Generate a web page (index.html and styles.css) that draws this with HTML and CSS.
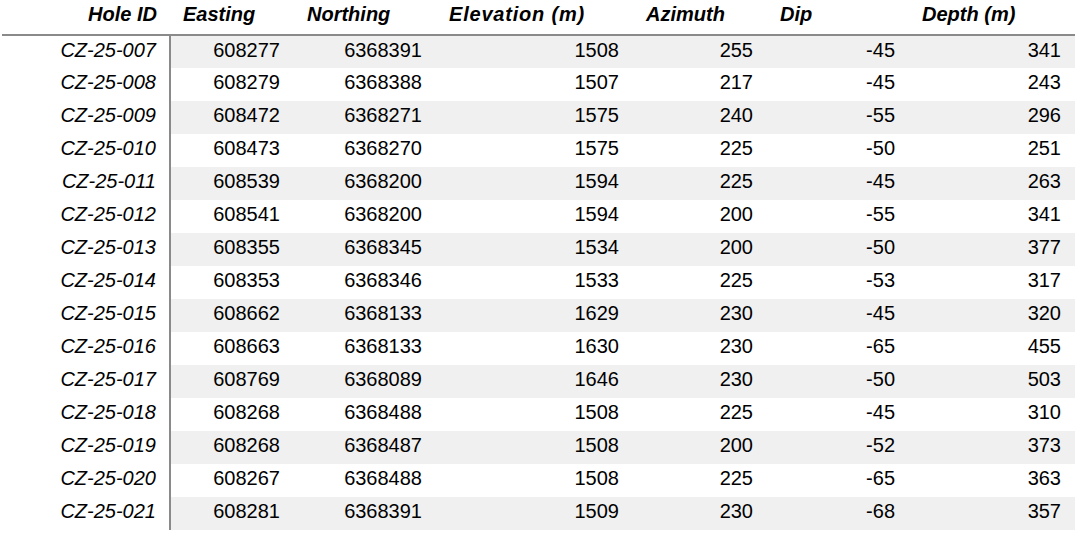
FILE: index.html
```html
<!DOCTYPE html>
<html>
<head>
<meta charset="utf-8">
<link rel="stylesheet" href="styles.css">
</head>
<body>
<table class="holes">
  <thead>
    <tr>
      <th class="c-id">Hole ID</th>
      <th class="c-e">Easting</th>
      <th class="c-n">Northing</th>
      <th class="c-el">Elevation (m)</th>
      <th class="c-az">Azimuth</th>
      <th class="c-dip">Dip</th>
      <th class="c-dp">Depth (m)</th>
    </tr>
  </thead>
  <tbody>
    <tr><td class="id">CZ-25-007</td><td class="first">608277</td><td>6368391</td><td>1508</td><td>255</td><td>-45</td><td>341</td></tr>
    <tr><td class="id">CZ-25-008</td><td class="first">608279</td><td>6368388</td><td>1507</td><td>217</td><td>-45</td><td>243</td></tr>
    <tr><td class="id">CZ-25-009</td><td class="first">608472</td><td>6368271</td><td>1575</td><td>240</td><td>-55</td><td>296</td></tr>
    <tr><td class="id">CZ-25-010</td><td class="first">608473</td><td>6368270</td><td>1575</td><td>225</td><td>-50</td><td>251</td></tr>
    <tr><td class="id">CZ-25-011</td><td class="first">608539</td><td>6368200</td><td>1594</td><td>225</td><td>-45</td><td>263</td></tr>
    <tr><td class="id">CZ-25-012</td><td class="first">608541</td><td>6368200</td><td>1594</td><td>200</td><td>-55</td><td>341</td></tr>
    <tr><td class="id">CZ-25-013</td><td class="first">608355</td><td>6368345</td><td>1534</td><td>200</td><td>-50</td><td>377</td></tr>
    <tr><td class="id">CZ-25-014</td><td class="first">608353</td><td>6368346</td><td>1533</td><td>225</td><td>-53</td><td>317</td></tr>
    <tr><td class="id">CZ-25-015</td><td class="first">608662</td><td>6368133</td><td>1629</td><td>230</td><td>-45</td><td>320</td></tr>
    <tr><td class="id">CZ-25-016</td><td class="first">608663</td><td>6368133</td><td>1630</td><td>230</td><td>-65</td><td>455</td></tr>
    <tr><td class="id">CZ-25-017</td><td class="first">608769</td><td>6368089</td><td>1646</td><td>230</td><td>-50</td><td>503</td></tr>
    <tr><td class="id">CZ-25-018</td><td class="first">608268</td><td>6368488</td><td>1508</td><td>225</td><td>-45</td><td>310</td></tr>
    <tr><td class="id">CZ-25-019</td><td class="first">608268</td><td>6368487</td><td>1508</td><td>200</td><td>-52</td><td>373</td></tr>
    <tr><td class="id">CZ-25-020</td><td class="first">608267</td><td>6368488</td><td>1508</td><td>225</td><td>-65</td><td>363</td></tr>
    <tr><td class="id">CZ-25-021</td><td class="first">608281</td><td>6368391</td><td>1509</td><td>230</td><td>-68</td><td>357</td></tr>
  </tbody>
</table>
</body>
</html>
```

FILE: styles.css
```css
html, body {
  margin: 0;
  padding: 0;
  background: #ffffff;
}

body {
  font-family: "Liberation Sans", Arial, sans-serif;
  color: #000000;
}

.holes {
  margin-left: 2px;
  border-collapse: collapse;
  table-layout: fixed;
  width: 1073px;
}

.holes th {
  font-size: 20px;
  font-weight: bold;
  font-style: italic;
  text-align: left;
  height: 29px;
  padding: 0 0 5px 13px;
  border-bottom: 2px solid #8a8a8a;
  vertical-align: middle;
  white-space: nowrap;
}

.holes th.c-id {
  text-align: right;
  padding: 0 13px 5px 0;
  width: 155px;
}

.c-e { width: 111px; }
.c-n { width: 129px; }
.c-el { width: 184px; }
.c-az { width: 121px; }
.c-dip { width: 129px; }
.c-dp { width: 153px; }

.holes th.c-el {
  letter-spacing: 0.8px;
}

.holes td {
  font-size: 20px;
  height: 33px;
  padding: 0 14px 4px 0;
  text-align: right;
  vertical-align: middle;
  white-space: nowrap;
  box-sizing: border-box;
}

.holes td.id {
  font-style: italic;
  padding-right: 13px;
  background: #ffffff;
}

.holes td.first {
  border-left: 2px solid #8a8a8a;
}

.holes tbody tr:nth-child(odd) td {
  background: #f0f0f0;
}

.holes tbody tr:nth-child(odd) td.id {
  background: #ffffff;
}
```
